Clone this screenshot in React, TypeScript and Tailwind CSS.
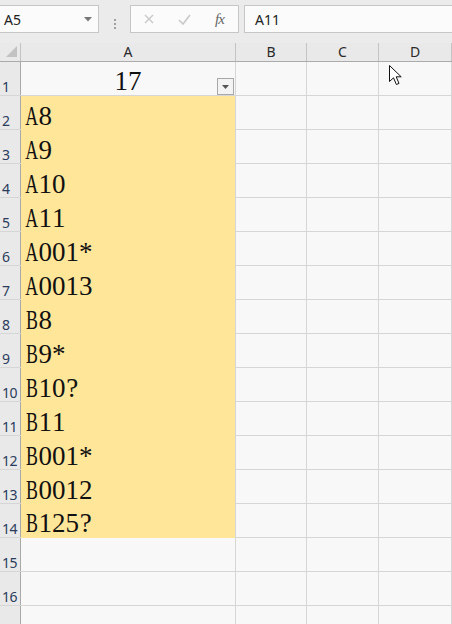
import React from "react";

const ROWS = ["A8", "A9", "A10", "A11", "A001*", "A0013", "B8", "B9*", "B10?", "B11", "B001*", "B0012", "B125?"];

const HEADER_FONT = "font-[family-name:'Noto_Sans','Liberation_Sans',sans-serif]";

// SimSun style: every latin char sits in a half-em cell
function CellText({ text }: { text: string }) {
  return (
    <span className="flex font-[family-name:'Liberation_Serif',serif] text-[27px] leading-[27px] text-[#111]">
      {text.split("").map((ch, i) => (
        <span key={i} className="flex w-[13.5px] justify-center">
          {/[A-Z]/.test(ch) ? <span className="inline-block scale-x-[0.66]">{ch}</span> : ch}
        </span>
      ))}
    </span>
  );
}

function RowHead({ n }: { n?: number }) {
  return (
    <div className={`w-[21px] shrink-0 border-r border-r-[#a9a9a9] bg-[#e9e9e9] pl-[2px] pb-[1px] flex items-end text-[14px] leading-[14px] text-[#2a3c5c] tracking-[-0.5px] ${HEADER_FONT}`}>
      {n}
    </div>
  );
}

function EmptyCells() {
  return (
    <>
      <div className="w-[71px] shrink-0 border-r border-r-[#d6d6d6]" />
      <div className="w-[72px] shrink-0 border-r border-r-[#d6d6d6]" />
      <div className="w-[73px] shrink-0 border-r border-r-[#d6d6d6]" />
    </>
  );
}

function Cursor() {
  return (
    <svg className="absolute left-[388px] top-[64px]" width="16" height="24" viewBox="0 0 16 24">
      <path d="M1.5 1.5 L1.5 17.5 L5.5 13.8 L8.4 20.5 L11 19.4 L8.2 12.8 L13.2 12.8 Z" fill="#fff" stroke="#111" strokeWidth="1" strokeLinejoin="miter" />
    </svg>
  );
}

export default function App() {
  return (
    <div className="relative w-[452px] h-[624px] overflow-hidden bg-[#f8f8f8]">
      {/* formula bar */}
      <div className={`flex h-[43px] bg-[#ebebeb] ${HEADER_FONT}`}>
        <div className="mt-[5px] h-[28px] w-[99px] shrink-0 border-y border-r border-[#c6c6c6] bg-[#fbfbfb] flex items-center justify-between pl-[4px] pr-[6px]">
          <span className="text-[14px] text-[#222]">A5</span>
          <svg width="8" height="5" viewBox="0 0 8 5"><path d="M0 0 H8 L4 4.5 Z" fill="#777" /></svg>
        </div>
        <div className="w-[31px] shrink-0 flex flex-col items-center justify-center gap-[2px] pt-[5px]">
          <span className="w-[2px] h-[2px] bg-[#a0a0a0]" />
          <span className="w-[2px] h-[2px] bg-[#a0a0a0]" />
          <span className="w-[2px] h-[2px] bg-[#a0a0a0]" />
        </div>
        <div className="mt-[5px] h-[28px] w-[109px] shrink-0 border border-[#c6c6c6] bg-[#fbfbfb] flex items-center">
          <svg className="ml-[13px]" width="10" height="10" viewBox="0 0 10 10"><path d="M1 1 L9 9 M9 1 L1 9" stroke="#c8c8c8" strokeWidth="1.4" /></svg>
          <svg className="ml-[24px]" width="13" height="11" viewBox="0 0 13 11"><path d="M1 6 L5 10 L12 1" fill="none" stroke="#c8c8c8" strokeWidth="1.6" /></svg>
          <span className="ml-[24px] font-[family-name:'Liberation_Serif',serif] italic text-[15px] text-[#666] tracking-[-1px]">fx</span>
        </div>
        <div className="ml-[5px] mt-[5px] h-[28px] flex-1 border-y border-l border-[#c6c6c6] bg-[#fbfbfb] flex items-center pl-[10px]">
          <span className="text-[14px] text-[#222]">A11</span>
        </div>
      </div>

      {/* column headers */}
      <div className={`flex h-[19px] border-b border-b-[#ababab] bg-[#e9e9e9] text-[14px] leading-[18px] text-[#2a2a2a] ${HEADER_FONT}`}>
        <div className="w-[21px] shrink-0 border-r border-r-[#c3c3c3] flex items-end justify-end pr-[3px] pb-[4px]">
          <svg width="11" height="11" viewBox="0 0 11 11"><path d="M11 0 V11 H0 Z" fill="#c2c2c2" /></svg>
        </div>
        <div className="w-[215px] shrink-0 border-r border-r-[#c3c3c3] text-center">A</div>
        <div className="w-[71px] shrink-0 border-r border-r-[#c3c3c3] text-center">B</div>
        <div className="w-[72px] shrink-0 border-r border-r-[#c3c3c3] text-center">C</div>
        <div className="w-[73px] shrink-0 border-r border-r-[#c3c3c3] text-center">D</div>
      </div>

      {/* row 1 */}
      <div className="flex h-[34px] border-b border-b-[#d6d6d6]">
        <RowHead n={1} />
        <div className="relative w-[215px] shrink-0 border-r border-r-[#d6d6d6] flex items-end justify-center">
          <CellText text="17" />
          <div className="absolute right-[1px] bottom-[0px] w-[17px] h-[17px] border border-[#a8a8a8] bg-[#f3f3f3] flex items-center justify-center">
            <svg width="7" height="4" viewBox="0 0 7 4"><path d="M0 0 H7 L3.5 4 Z" fill="#555" /></svg>
          </div>
        </div>
        <EmptyCells />
      </div>

      {ROWS.map((t, i) => (
        <div key={t} className="flex h-[34px] border-b border-b-[#d6d6d6]">
          <RowHead n={i + 2} />
          <div className={`w-[215px] shrink-0 -mb-[1px] border-r border-r-[#d6d6d6] bg-[#ffe699] flex items-end pl-[4px] ${i === ROWS.length - 1 ? "pb-[1px]" : ""}`}>
            <CellText text={t} />
          </div>
          <EmptyCells />
        </div>
      ))}

      {[15, 16, 0].map((n) => (
        <div key={n} className="flex h-[34px] border-b border-b-[#d6d6d6]">
          <RowHead n={n || undefined} />
          <div className="w-[215px] shrink-0 border-r border-r-[#d6d6d6]" />
          <EmptyCells />
        </div>
      ))}

      <Cursor />
    </div>
  );
}
